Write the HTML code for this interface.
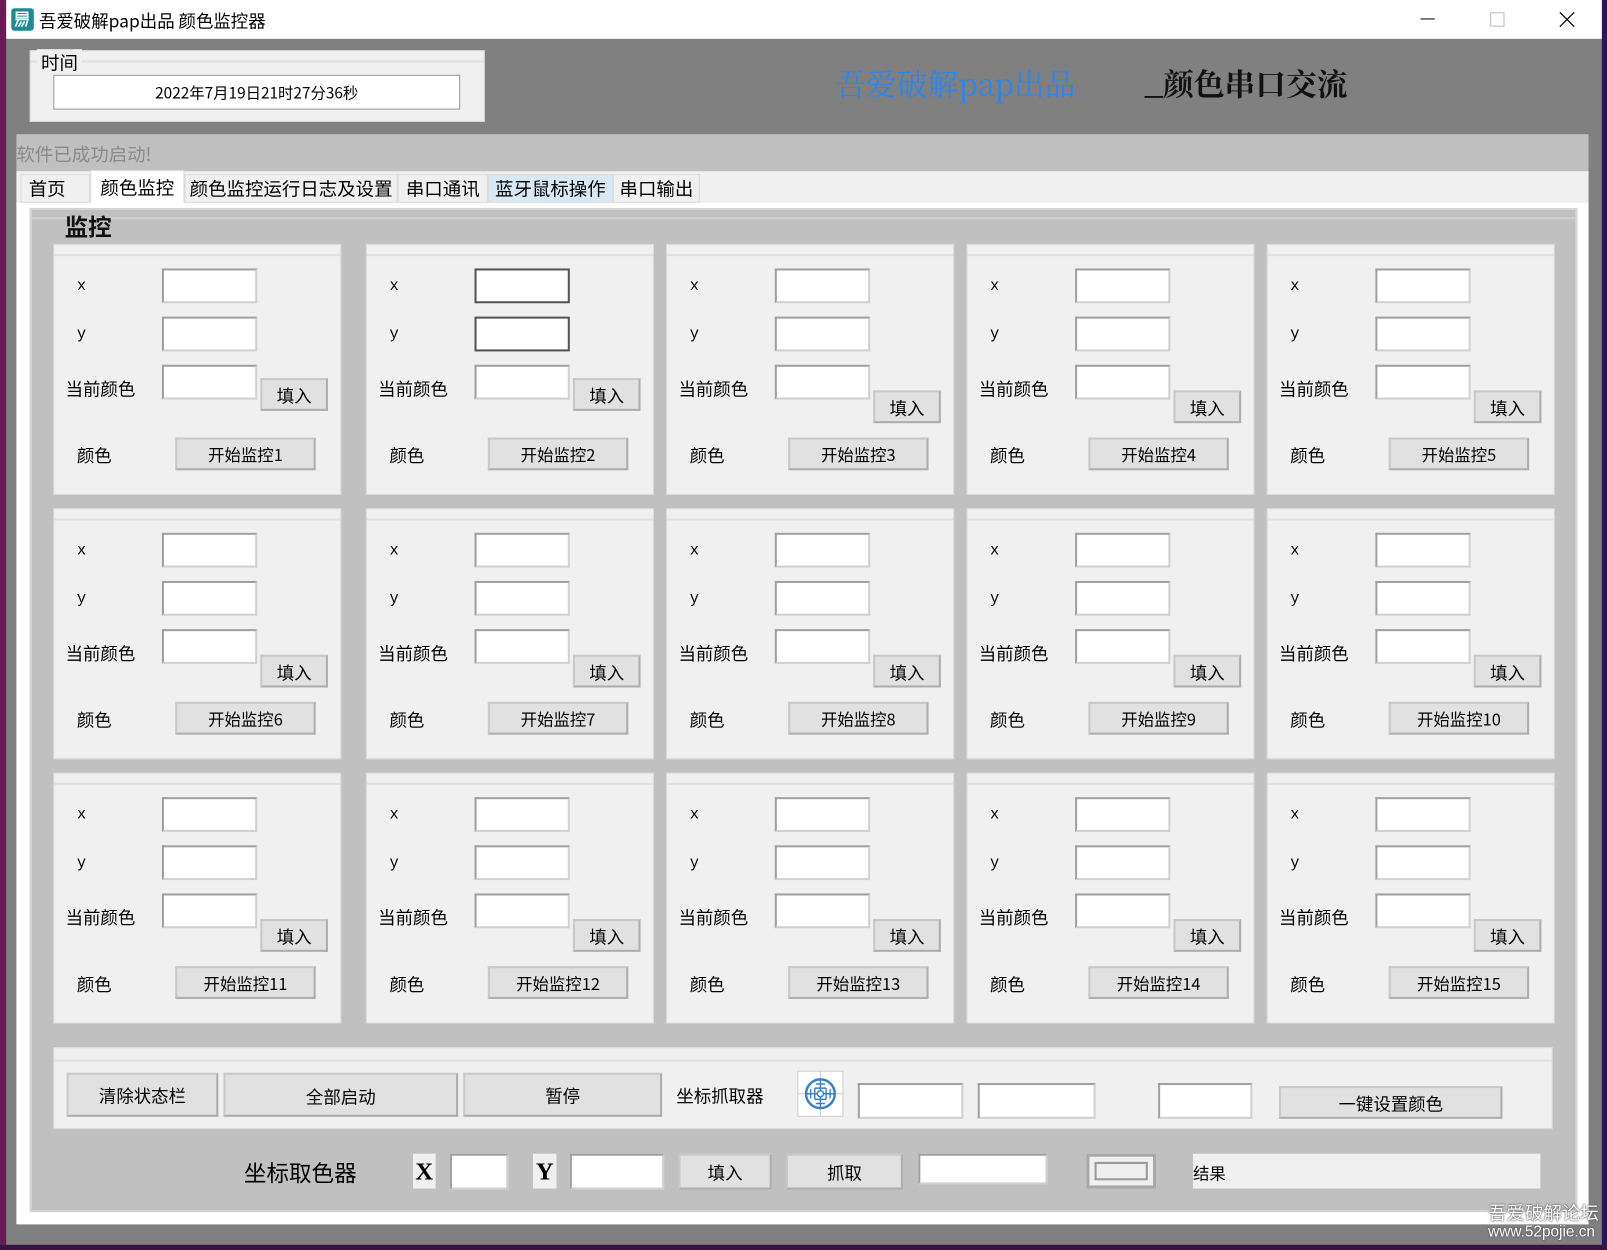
<!DOCTYPE html>
<html><head><meta charset="utf-8"><style>
*{margin:0;padding:0;box-sizing:border-box}
html,body{width:1607px;height:1250px;overflow:hidden;background:#3a1440}
#w{position:absolute;left:0;top:0;width:1568px;height:1220px;transform:scale(1.02487,1.02459);transform-origin:0 0;font-family:"Liberation Sans","Noto Sans CJK SC",sans-serif;color:#000}
.a{position:absolute}
.inp{position:absolute;background:#fff;border:2px solid #a0a0a0;border-right-color:#d0d0d0;border-bottom-color:#d0d0d0}
.btn{position:absolute;background:#e1e1e1;border:2px solid #c8c8c8;border-right-color:#adadad;border-bottom-color:#adadad;font-size:17px;display:flex;align-items:center;justify-content:center;font-family:"Noto Sans CJK SC",sans-serif}
.cell{position:absolute;width:281px;height:245px;background:#f0f0f0;border:1px solid #d8d8d8}
.cell:before{content:"";position:absolute;left:0;right:0;top:9px;border-top:2px solid #e0e0e0}
.cell .l{position:absolute;font-size:17px;font-family:"Noto Sans CJK SC",sans-serif}
.cell .xy{position:absolute;font-size:15px;font-family:"Liberation Mono",monospace}
.tab{position:absolute;top:170px;height:28px;font-size:18px;font-family:"Noto Sans CJK SC",sans-serif;border:1px solid #d9d9d9;background:#f0f0f0;display:flex;align-items:center;justify-content:center}
</style></head><body><div id="w">
<div class="a" style="left:0;top:0;width:6px;height:1220px;background:#6a1a55"></div>
<div class="a" style="left:1563px;top:0;width:5px;height:1220px;background:#2a1560"></div>
<div class="a" style="left:6px;top:0;width:1557px;height:38px;background:#fff"></div>
<svg class="a" style="left:10px;top:7px" width="24" height="24" viewBox="0 0 24 24"><rect x="1" y="1" width="22" height="22" rx="3" fill="#1f8a93"/><path d="M6 5h11v5H6zM6 7.5h11M5 12h13M8 12l-3 7M11 14l-3 5M14 14l-3 5M17 13l-2 6" stroke="#fff" stroke-width="1.6" fill="none"/></svg>
<div class="a" style="left:38px;top:7px;font-size:17px;font-family:'Noto Sans CJK SC',sans-serif">吾爱破解pap出品 颜色监控器</div>
<div class="a" style="left:1386px;top:18px;width:14px;border-top:1px solid #000"></div>
<div class="a" style="left:1454px;top:12px;width:14px;height:14px;border:1px solid #bbb"></div>
<svg class="a" style="left:1521px;top:11px" width="16" height="16"><path d="M1 1L15 15M15 1L1 15" stroke="#000" stroke-width="1.2"/></svg>
<div class="a" style="left:6px;top:38px;width:1557px;height:1177px;background:#808080"></div>
<div class="a" style="left:0;top:1215px;width:1568px;height:5px;background:#3a1440"></div>
<div class="a" style="left:29px;top:49px;width:444px;height:70px;background:#f0f0f0;border:1px solid #d8d8d8"></div>
<div class="a" style="left:30px;top:59px;width:442px;border-top:2px solid #e0e0e0"></div>
<div class="a" style="left:36px;top:48px;padding:0 4px;background:#f0f0f0;font-size:18px;font-family:'Noto Sans CJK SC',sans-serif">时间</div>
<div class="inp" style="left:52px;top:73px;width:397px;height:34px;border:1px solid #999;display:flex;align-items:center;justify-content:center;font-size:15px;font-family:'Noto Sans CJK SC',sans-serif">2022年7月19日21时27分36秒</div>
<div class="a" style="left:815px;top:58px;font-size:30px;color:#2a86ee;font-family:'Noto Serif CJK SC',serif">吾爱破解pap出品</div>
<div class="a" style="left:1117px;top:58px;font-size:30px;color:#111;font-family:'Noto Serif CJK SC',serif;font-weight:bold">_颜色串口交流</div>
<div class="a" style="left:16px;top:131px;width:1534px;height:36px;background:#c0c0c0"></div>
<div class="a" style="left:16px;top:137px;font-size:18px;color:#8a8a8a;font-family:'Noto Sans CJK SC',sans-serif">软件已成功启动!</div>
<div class="a" style="left:16px;top:167px;width:1534px;height:33px;background:#f0f0f0"></div>
<div class="tab" style="left:20px;width:68px;justify-content:flex-start;padding-left:7px">首页</div>
<div class="tab" style="left:88px;top:166px;height:33px;width:92px;background:#fff;border-bottom:none">颜色监控</div>
<div class="tab" style="left:180px;width:208px">颜色监控运行日志及设置</div>
<div class="tab" style="left:388px;width:88px">串口通讯</div>
<div class="tab" style="left:476px;width:122px;background:#d9e8f5">蓝牙鼠标操作</div>
<div class="tab" style="left:598px;width:85px">串口输出</div>
<div class="a" style="left:16px;top:198px;width:1534px;height:997px;background:#fff"></div>
<div class="a" style="left:29px;top:203px;width:1510px;height:980px;background:#c0c0c0;border:2px solid #d4d4d4"></div>
<div class="a" style="left:31px;top:212px;width:1506px;border-top:2px solid #d0d0d0"></div>
<div class="a" style="left:63px;top:203px;font-size:23px;font-weight:bold;font-family:'Noto Sans CJK SC',sans-serif;color:#111">监控</div>

<div class="cell" style="left:52px;top:238px"><div class="xy" style="left:22px;top:32px">x</div><div class="inp" style="left:105px;top:23px;width:93px;height:34px"></div><div class="xy" style="left:22px;top:79px">y</div><div class="inp" style="left:105px;top:70px;width:93px;height:34px"></div><div class="l" style="left:11px;top:127px">当前颜色</div><div class="inp" style="left:105px;top:117px;width:93px;height:34px"></div><div class="btn" style="left:201px;top:130px;width:66px;height:32px">填入</div><div class="l" style="left:22px;top:192px">颜色</div><div class="btn" style="left:118px;top:188px;width:137px;height:32px;font-size:16px">开始监控1</div></div>
<div class="cell" style="left:357px;top:238px"><div class="xy" style="left:22px;top:32px">x</div><div class="inp" style="left:105px;top:23px;width:93px;height:34px;border-color:#555"></div><div class="xy" style="left:22px;top:79px">y</div><div class="inp" style="left:105px;top:70px;width:93px;height:34px;border-color:#555"></div><div class="l" style="left:11px;top:127px">当前颜色</div><div class="inp" style="left:105px;top:117px;width:93px;height:34px"></div><div class="btn" style="left:201px;top:130px;width:66px;height:32px">填入</div><div class="l" style="left:22px;top:192px">颜色</div><div class="btn" style="left:118px;top:188px;width:137px;height:32px;font-size:16px">开始监控2</div></div>
<div class="cell" style="left:650px;top:238px"><div class="xy" style="left:22px;top:32px">x</div><div class="inp" style="left:105px;top:23px;width:93px;height:34px"></div><div class="xy" style="left:22px;top:79px">y</div><div class="inp" style="left:105px;top:70px;width:93px;height:34px"></div><div class="l" style="left:11px;top:127px">当前颜色</div><div class="inp" style="left:105px;top:117px;width:93px;height:34px"></div><div class="btn" style="left:201px;top:142px;width:66px;height:32px">填入</div><div class="l" style="left:22px;top:192px">颜色</div><div class="btn" style="left:118px;top:188px;width:137px;height:32px;font-size:16px">开始监控3</div></div>
<div class="cell" style="left:943px;top:238px"><div class="xy" style="left:22px;top:32px">x</div><div class="inp" style="left:105px;top:23px;width:93px;height:34px"></div><div class="xy" style="left:22px;top:79px">y</div><div class="inp" style="left:105px;top:70px;width:93px;height:34px"></div><div class="l" style="left:11px;top:127px">当前颜色</div><div class="inp" style="left:105px;top:117px;width:93px;height:34px"></div><div class="btn" style="left:201px;top:142px;width:66px;height:32px">填入</div><div class="l" style="left:22px;top:192px">颜色</div><div class="btn" style="left:118px;top:188px;width:137px;height:32px;font-size:16px">开始监控4</div></div>
<div class="cell" style="left:1236px;top:238px"><div class="xy" style="left:22px;top:32px">x</div><div class="inp" style="left:105px;top:23px;width:93px;height:34px"></div><div class="xy" style="left:22px;top:79px">y</div><div class="inp" style="left:105px;top:70px;width:93px;height:34px"></div><div class="l" style="left:11px;top:127px">当前颜色</div><div class="inp" style="left:105px;top:117px;width:93px;height:34px"></div><div class="btn" style="left:201px;top:142px;width:66px;height:32px">填入</div><div class="l" style="left:22px;top:192px">颜色</div><div class="btn" style="left:118px;top:188px;width:137px;height:32px;font-size:16px">开始监控5</div></div>

<div class="cell" style="left:52px;top:496px"><div class="xy" style="left:22px;top:32px">x</div><div class="inp" style="left:105px;top:23px;width:93px;height:34px"></div><div class="xy" style="left:22px;top:79px">y</div><div class="inp" style="left:105px;top:70px;width:93px;height:34px"></div><div class="l" style="left:11px;top:127px">当前颜色</div><div class="inp" style="left:105px;top:117px;width:93px;height:34px"></div><div class="btn" style="left:201px;top:142px;width:66px;height:32px">填入</div><div class="l" style="left:22px;top:192px">颜色</div><div class="btn" style="left:118px;top:188px;width:137px;height:32px;font-size:16px">开始监控6</div></div>
<div class="cell" style="left:357px;top:496px"><div class="xy" style="left:22px;top:32px">x</div><div class="inp" style="left:105px;top:23px;width:93px;height:34px"></div><div class="xy" style="left:22px;top:79px">y</div><div class="inp" style="left:105px;top:70px;width:93px;height:34px"></div><div class="l" style="left:11px;top:127px">当前颜色</div><div class="inp" style="left:105px;top:117px;width:93px;height:34px"></div><div class="btn" style="left:201px;top:142px;width:66px;height:32px">填入</div><div class="l" style="left:22px;top:192px">颜色</div><div class="btn" style="left:118px;top:188px;width:137px;height:32px;font-size:16px">开始监控7</div></div>
<div class="cell" style="left:650px;top:496px"><div class="xy" style="left:22px;top:32px">x</div><div class="inp" style="left:105px;top:23px;width:93px;height:34px"></div><div class="xy" style="left:22px;top:79px">y</div><div class="inp" style="left:105px;top:70px;width:93px;height:34px"></div><div class="l" style="left:11px;top:127px">当前颜色</div><div class="inp" style="left:105px;top:117px;width:93px;height:34px"></div><div class="btn" style="left:201px;top:142px;width:66px;height:32px">填入</div><div class="l" style="left:22px;top:192px">颜色</div><div class="btn" style="left:118px;top:188px;width:137px;height:32px;font-size:16px">开始监控8</div></div>
<div class="cell" style="left:943px;top:496px"><div class="xy" style="left:22px;top:32px">x</div><div class="inp" style="left:105px;top:23px;width:93px;height:34px"></div><div class="xy" style="left:22px;top:79px">y</div><div class="inp" style="left:105px;top:70px;width:93px;height:34px"></div><div class="l" style="left:11px;top:127px">当前颜色</div><div class="inp" style="left:105px;top:117px;width:93px;height:34px"></div><div class="btn" style="left:201px;top:142px;width:66px;height:32px">填入</div><div class="l" style="left:22px;top:192px">颜色</div><div class="btn" style="left:118px;top:188px;width:137px;height:32px;font-size:16px">开始监控9</div></div>
<div class="cell" style="left:1236px;top:496px"><div class="xy" style="left:22px;top:32px">x</div><div class="inp" style="left:105px;top:23px;width:93px;height:34px"></div><div class="xy" style="left:22px;top:79px">y</div><div class="inp" style="left:105px;top:70px;width:93px;height:34px"></div><div class="l" style="left:11px;top:127px">当前颜色</div><div class="inp" style="left:105px;top:117px;width:93px;height:34px"></div><div class="btn" style="left:201px;top:142px;width:66px;height:32px">填入</div><div class="l" style="left:22px;top:192px">颜色</div><div class="btn" style="left:118px;top:188px;width:137px;height:32px;font-size:16px">开始监控10</div></div>

<div class="cell" style="left:52px;top:754px"><div class="xy" style="left:22px;top:32px">x</div><div class="inp" style="left:105px;top:23px;width:93px;height:34px"></div><div class="xy" style="left:22px;top:79px">y</div><div class="inp" style="left:105px;top:70px;width:93px;height:34px"></div><div class="l" style="left:11px;top:127px">当前颜色</div><div class="inp" style="left:105px;top:117px;width:93px;height:34px"></div><div class="btn" style="left:201px;top:142px;width:66px;height:32px">填入</div><div class="l" style="left:22px;top:192px">颜色</div><div class="btn" style="left:118px;top:188px;width:137px;height:32px;font-size:16px">开始监控11</div></div>
<div class="cell" style="left:357px;top:754px"><div class="xy" style="left:22px;top:32px">x</div><div class="inp" style="left:105px;top:23px;width:93px;height:34px"></div><div class="xy" style="left:22px;top:79px">y</div><div class="inp" style="left:105px;top:70px;width:93px;height:34px"></div><div class="l" style="left:11px;top:127px">当前颜色</div><div class="inp" style="left:105px;top:117px;width:93px;height:34px"></div><div class="btn" style="left:201px;top:142px;width:66px;height:32px">填入</div><div class="l" style="left:22px;top:192px">颜色</div><div class="btn" style="left:118px;top:188px;width:137px;height:32px;font-size:16px">开始监控12</div></div>
<div class="cell" style="left:650px;top:754px"><div class="xy" style="left:22px;top:32px">x</div><div class="inp" style="left:105px;top:23px;width:93px;height:34px"></div><div class="xy" style="left:22px;top:79px">y</div><div class="inp" style="left:105px;top:70px;width:93px;height:34px"></div><div class="l" style="left:11px;top:127px">当前颜色</div><div class="inp" style="left:105px;top:117px;width:93px;height:34px"></div><div class="btn" style="left:201px;top:142px;width:66px;height:32px">填入</div><div class="l" style="left:22px;top:192px">颜色</div><div class="btn" style="left:118px;top:188px;width:137px;height:32px;font-size:16px">开始监控13</div></div>
<div class="cell" style="left:943px;top:754px"><div class="xy" style="left:22px;top:32px">x</div><div class="inp" style="left:105px;top:23px;width:93px;height:34px"></div><div class="xy" style="left:22px;top:79px">y</div><div class="inp" style="left:105px;top:70px;width:93px;height:34px"></div><div class="l" style="left:11px;top:127px">当前颜色</div><div class="inp" style="left:105px;top:117px;width:93px;height:34px"></div><div class="btn" style="left:201px;top:142px;width:66px;height:32px">填入</div><div class="l" style="left:22px;top:192px">颜色</div><div class="btn" style="left:118px;top:188px;width:137px;height:32px;font-size:16px">开始监控14</div></div>
<div class="cell" style="left:1236px;top:754px"><div class="xy" style="left:22px;top:32px">x</div><div class="inp" style="left:105px;top:23px;width:93px;height:34px"></div><div class="xy" style="left:22px;top:79px">y</div><div class="inp" style="left:105px;top:70px;width:93px;height:34px"></div><div class="l" style="left:11px;top:127px">当前颜色</div><div class="inp" style="left:105px;top:117px;width:93px;height:34px"></div><div class="btn" style="left:201px;top:142px;width:66px;height:32px">填入</div><div class="l" style="left:22px;top:192px">颜色</div><div class="btn" style="left:118px;top:188px;width:137px;height:32px;font-size:16px">开始监控15</div></div>

<div class="a" style="left:52px;top:1022px;width:1463px;height:80px;background:#f0f0f0;border:1px solid #d8d8d8"></div>
<div class="a" style="left:53px;top:1034px;width:1461px;border-top:2px solid #e0e0e0"></div>
<div class="btn" style="left:65px;top:1047px;width:148px;height:43px">清除状态栏</div>
<div class="btn" style="left:218px;top:1047px;width:229px;height:43px;align-items:flex-start;padding-top:8px">全部启动</div>
<div class="btn" style="left:452px;top:1047px;width:194px;height:43px">暂停</div>
<div class="a" style="left:660px;top:1056px;font-size:17px;font-family:'Noto Sans CJK SC',sans-serif">坐标抓取器</div>
<div class="a" style="left:778px;top:1045px;width:45px;height:45px;background:#fff;border:1px solid #ccc"></div>
<svg class="a" style="left:778px;top:1045px" width="45" height="45" viewBox="0 0 45 45"><path d="M22.5 0V45M0 22.5H45" stroke="#ccc" stroke-width="1"/><circle cx="22.5" cy="22.5" r="14" fill="none" stroke="#3b7fc4" stroke-width="2.4"/><path d="M22.5 9V36M9 22.5H36M18 13h9M17 17h11M17 28h11M18 32h9M13 18v9M17 17v11M28 17v11M32 18v9" stroke="#3b7fc4" stroke-width="1.4"/><circle cx="22.5" cy="22.5" r="3" fill="#fff" stroke="#3b7fc4" stroke-width="1.4"/></svg>
<div class="inp" style="left:837px;top:1057px;width:103px;height:35px"></div>
<div class="inp" style="left:954px;top:1057px;width:115px;height:35px"></div>
<div class="inp" style="left:1130px;top:1057px;width:92px;height:35px"></div>
<div class="btn" style="left:1248px;top:1060px;width:218px;height:32px">一键设置颜色</div>
<div class="a" style="left:238px;top:1128px;font-size:22px;font-family:'Noto Sans CJK SC',sans-serif">坐标取色器</div>
<div class="a" style="left:403px;top:1126px;width:22px;height:34px;background:#f0f0f0;font:bold 24px 'Liberation Serif',serif;text-align:center;line-height:36px">X</div>
<div class="inp" style="left:439px;top:1126px;width:57px;height:35px"></div>
<div class="a" style="left:520px;top:1126px;width:23px;height:34px;background:#f0f0f0;font:bold 24px 'Liberation Serif',serif;text-align:center;line-height:36px">Y</div>
<div class="inp" style="left:556px;top:1126px;width:92px;height:35px"></div>
<div class="btn" style="left:662px;top:1126px;width:91px;height:35px">填入</div>
<div class="btn" style="left:767px;top:1126px;width:114px;height:35px">抓取</div>
<div class="inp" style="left:896px;top:1126px;width:126px;height:30px"></div>
<div class="a" style="left:1060px;top:1126px;width:68px;height:34px;background:#f0f0f0;border:3px solid #a8a8a8"></div>
<div class="a" style="left:1068px;top:1134px;width:52px;height:18px;border:2px solid #999;background:#eee"></div>
<div class="a" style="left:1164px;top:1126px;width:339px;height:34px;background:#f0f0f0;font-size:16px;font-family:'Noto Sans CJK SC',sans-serif;padding:6px 0 0 0">结果</div>
<div class="a" style="left:1452px;top:1170px;font-size:18px;color:#fff;font-family:'Noto Sans CJK SC',sans-serif;text-shadow:0 0 2px #555,0 0 1px #333">吾爱破解论坛</div>
<div class="a" style="left:1452px;top:1194px;font-size:15px;color:#fff;text-shadow:0 0 2px #555,0 0 1px #333">www.52pojie.cn</div>
</div></body></html>
